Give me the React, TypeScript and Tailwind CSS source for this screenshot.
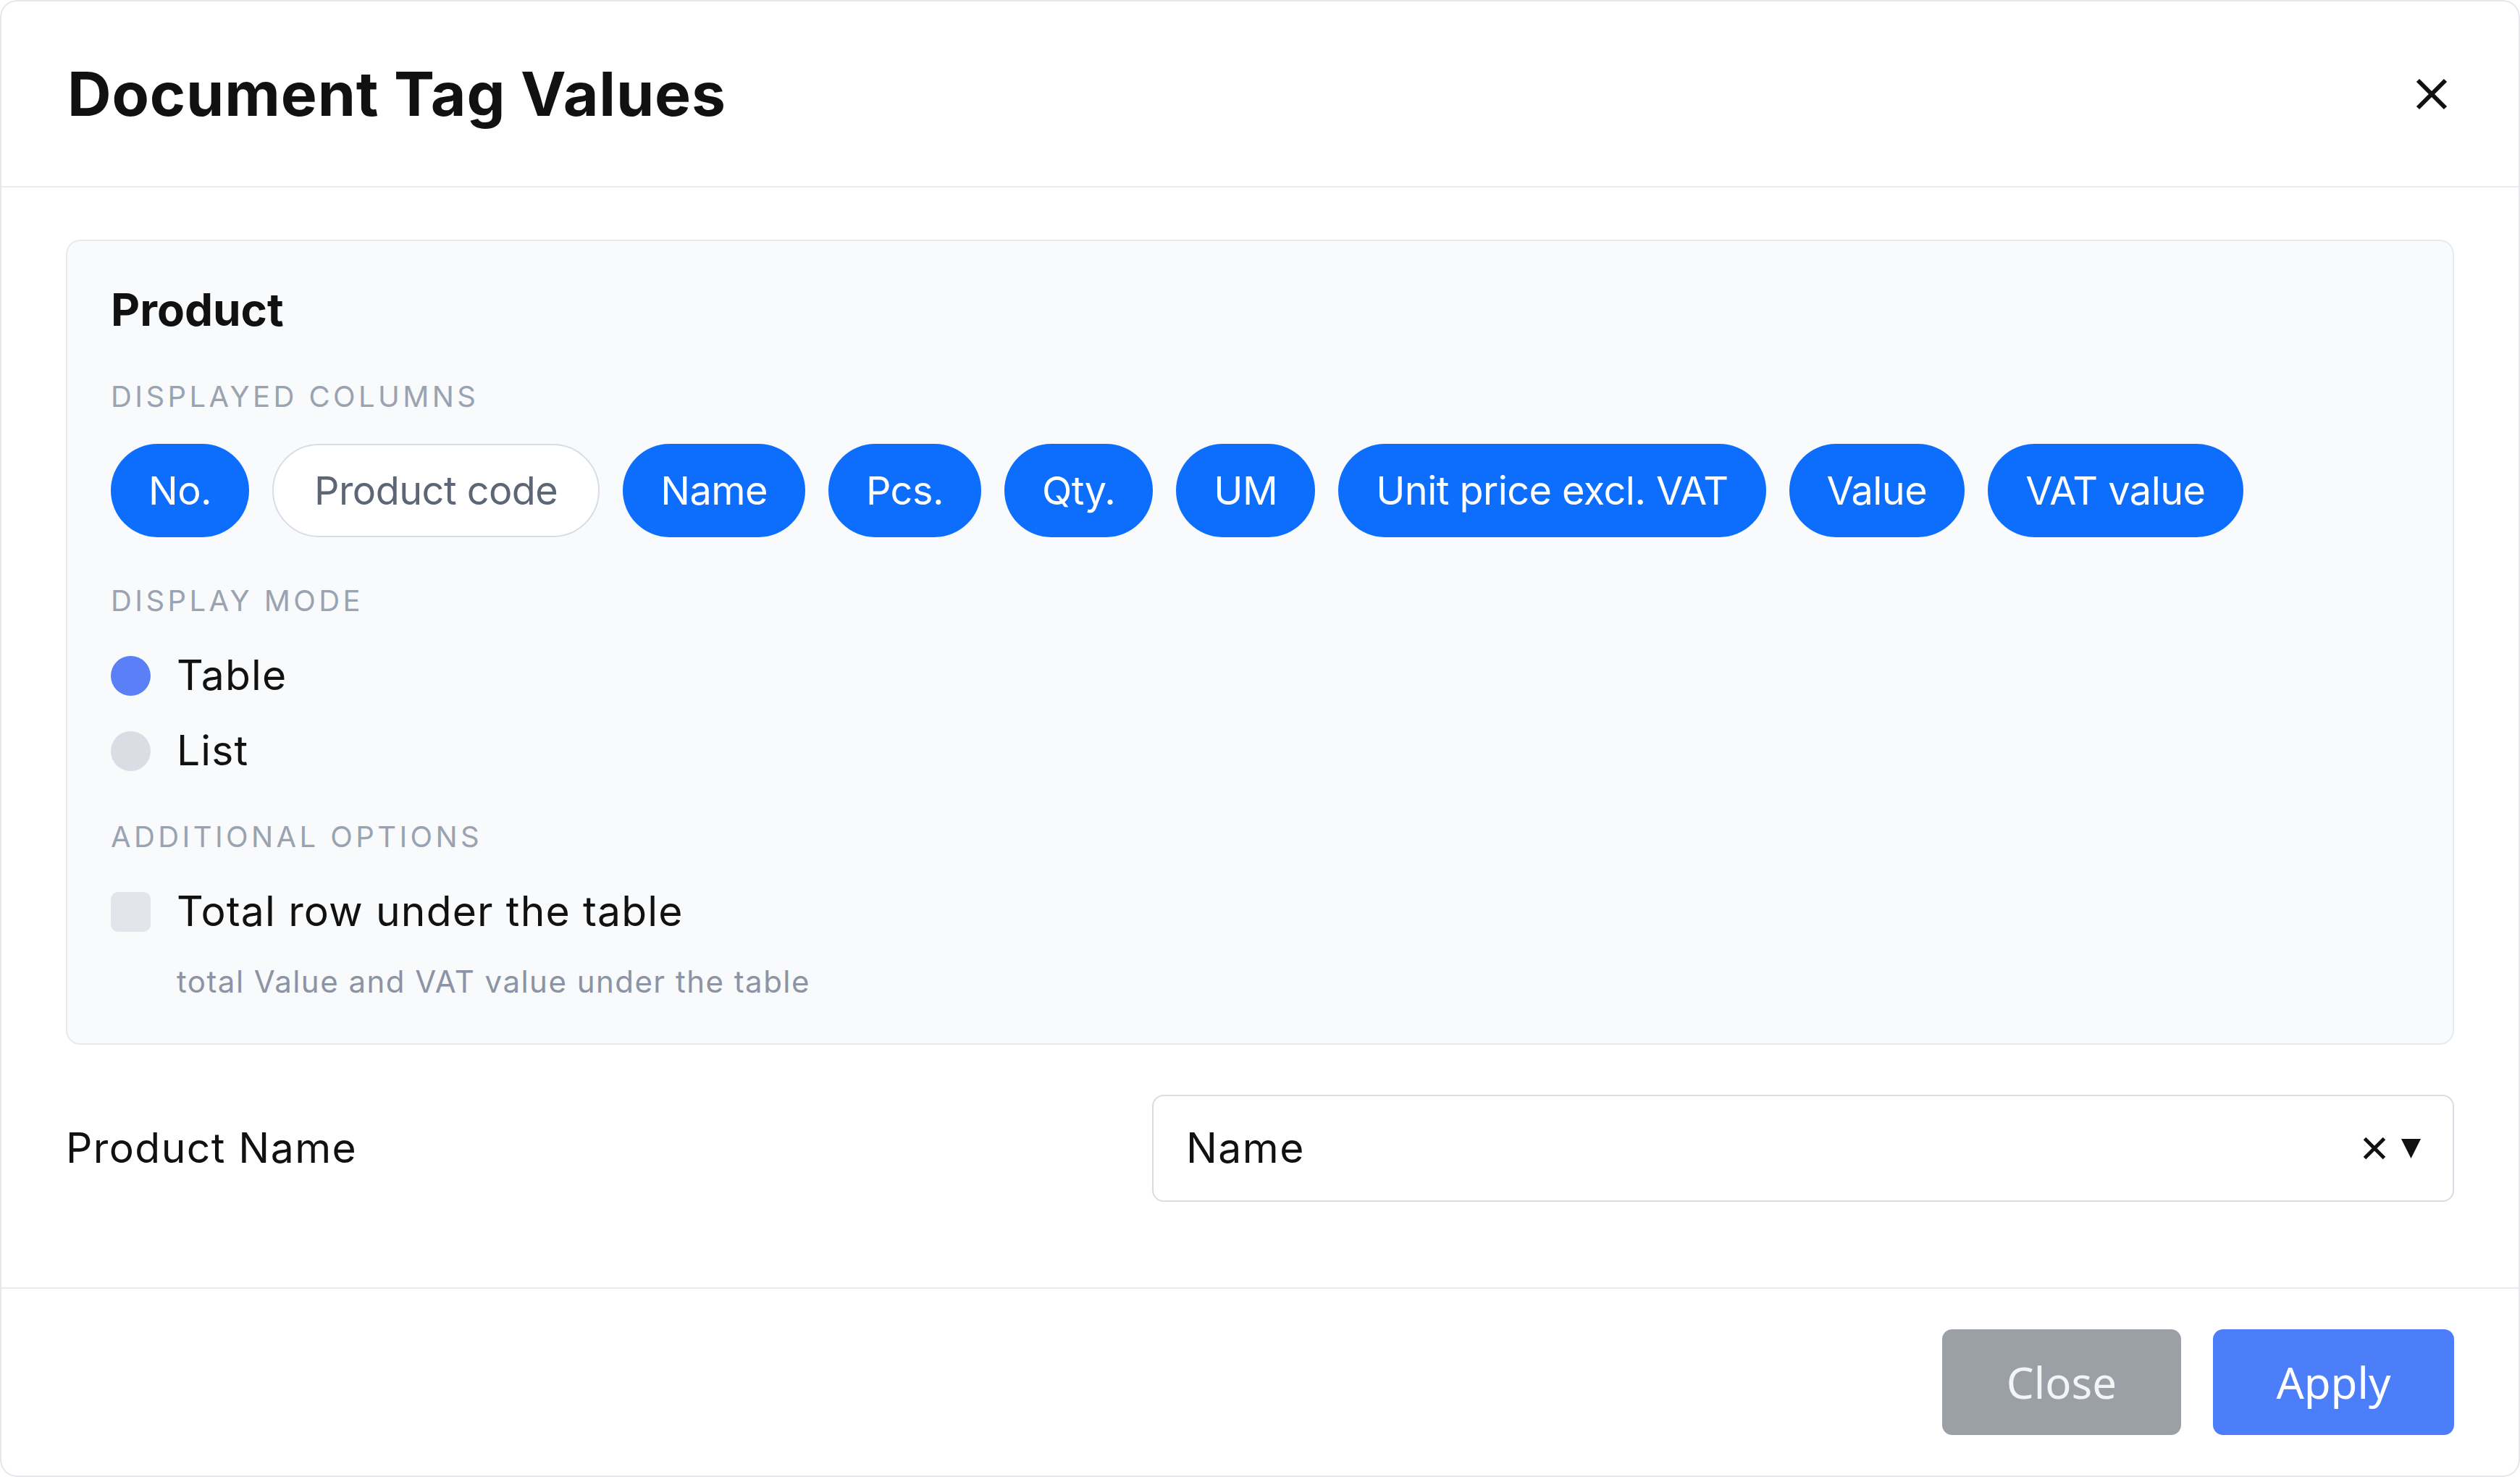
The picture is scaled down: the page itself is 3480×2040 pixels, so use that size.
import React from "react";

type Column = { label: string; active: boolean };

const COLUMNS: Column[] = [
  { label: "No.", active: true },
  { label: "Product code", active: false },
  { label: "Name", active: true },
  { label: "Pcs.", active: true },
  { label: "Qty.", active: true },
  { label: "UM", active: true },
  { label: "Unit price excl. VAT", active: true },
  { label: "Value", active: true },
  { label: "VAT value", active: true },
];

const CrossIcon = ({ size, stroke }: { size: number; stroke: number }) => (
  <svg width={size} height={size} viewBox={`0 0 ${size} ${size}`} fill="none">
    <path
      d={`M${stroke / 2} ${stroke / 2}L${size - stroke / 2} ${size - stroke / 2}M${size - stroke / 2} ${stroke / 2}L${stroke / 2} ${size - stroke / 2}`}
      stroke="#111111"
      strokeWidth={stroke}
    />
  </svg>
);

const SectionLabel = ({ children, className = "" }: { children: React.ReactNode; className?: string }) => (
  <div className={`h-[48px] text-[40px] leading-[48px] uppercase tracking-[0.11em] text-[#9aa3b1] ${className}`}>
    {children}
  </div>
);

export default function App() {
  return (
    <div className="h-[2040px] w-[3480px] bg-white font-['Inter',sans-serif] text-[#111111]">
      <div className="flex h-full flex-col rounded-[24px] border-2 border-[#e6e7ea] bg-white">
        {/* Header */}
        <header className="flex h-[257px] shrink-0 items-center justify-between border-b-2 border-[#ececee] pl-[91px] pr-[98px]">
          <h1 className="text-[84px] font-bold leading-none tracking-[0.01em]">Document Tag Values</h1>
          <button className="flex h-[44px] w-[44px] items-center justify-center">
            <CrossIcon size={44} stroke={6} />
          </button>
        </header>

        {/* Body */}
        <main className="flex-1 px-[89px] pt-[72px]">
          <section className="rounded-[20px] border-2 border-[#e6e9ee] bg-[#f8fafc] px-[60px] pt-[58px] pb-[60px]">
            <h2 className="h-[74px] text-[62px] font-bold leading-[74px] tracking-normal">Product</h2>

            <SectionLabel className="mt-[59px]">Displayed columns</SectionLabel>
            <div className="mt-[41px] flex flex-wrap gap-[32px]">
              {COLUMNS.map((col) =>
                col.active ? (
                  <span
                    key={col.label}
                    className="flex h-[129px] items-center rounded-full bg-[#0d6efd] px-[52px] text-[54px] tracking-[-0.01em] text-white"
                  >
                    {col.label}
                  </span>
                ) : (
                  <span
                    key={col.label}
                    className="flex h-[129px] items-center rounded-full border-2 border-[#d7dde6] bg-white px-[56px] text-[54px] tracking-[-0.01em] text-[#5d6675]"
                  >
                    {col.label}
                  </span>
                )
              )}
            </div>

            <SectionLabel className="mt-[64px]">Display mode</SectionLabel>
            <div className="mt-[44px] flex flex-col gap-[34px]">
              <label className="flex h-[70px] items-center gap-[36px] text-[57px] tracking-[0.02em]">
                <span className="h-[55px] w-[55px] rounded-full bg-[#5b7ff7]" />
                Table
              </label>
              <label className="flex h-[70px] items-center gap-[36px] text-[57px] tracking-[0.02em]">
                <span className="h-[55px] w-[55px] rounded-full bg-[#dadde3]" />
                List
              </label>
            </div>

            <SectionLabel className="mt-[60px]">Additional options</SectionLabel>
            <label className="mt-[44px] flex h-[70px] items-center gap-[36px] text-[57px] tracking-[0.02em]">
              <span className="h-[55px] w-[55px] rounded-[10px] bg-[#e3e5ea]" />
              Total row under the table
            </label>
            <p className="mt-[37px] h-[50px] pl-[91px] text-[42px] leading-[50px] tracking-[0.035em] text-[#8b94a5]">
              total Value and VAT value under the table
            </p>
          </section>

          <div className="mt-[69px] flex items-center">
            <span className="flex-1 text-[57px] tracking-[0.025em]">Product Name</span>
            <div className="flex h-[148px] w-[1798px] items-center rounded-[16px] border-2 border-[#d7dde6] bg-white pl-[45px] pr-[44px]">
              <span className="flex-1 text-[57px] tracking-[0.025em]">Name</span>
              <CrossIcon size={32} stroke={5} />
              <svg className="ml-[21px]" width="27" height="27" viewBox="0 0 27 27">
                <path d="M0 0H27L13.5 27Z" fill="#111111" />
              </svg>
            </div>
          </div>
        </main>

        {/* Footer */}
        <footer className="flex h-[260px] shrink-0 items-center justify-end gap-[44px] border-t-2 border-[#ececee] px-[89px]">
          <button className="flex h-[146px] w-[330px] items-center justify-center rounded-[14px] bg-[#9b9fa6] font-['Noto_Sans',sans-serif] text-[60px] text-[#f3f4f6]">
            Close
          </button>
          <button className="flex h-[146px] w-[333px] items-center justify-center rounded-[14px] bg-[#4d7ef9] font-['Noto_Sans',sans-serif] text-[60px] text-white">
            Apply
          </button>
        </footer>
      </div>
    </div>
  );
}
